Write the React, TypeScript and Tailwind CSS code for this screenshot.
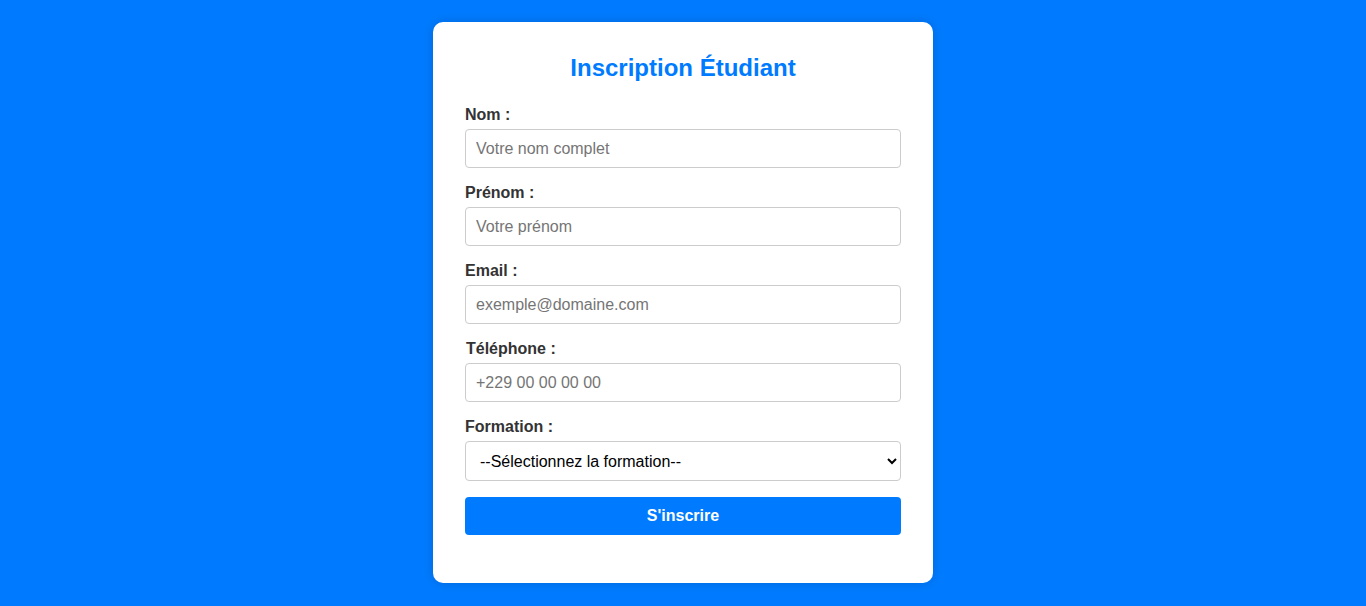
import React from "react";

const fields = [
  { label: "Nom :", placeholder: "Votre nom complet", type: "text" },
  { label: "Prénom :", placeholder: "Votre prénom", type: "text" },
  { label: "Email :", placeholder: "exemple@domaine.com", type: "email" },
  { label: "Téléphone :", placeholder: "+229 00 00 00 00", type: "tel", indent: true },
];

export default function App() {
  return (
    <div
      className="min-h-[606px] w-full bg-[#007bff] flex justify-center pt-[22px]"
      style={{ fontFamily: '"Liberation Sans", Arial, sans-serif' }}
    >
      <div className="w-[500px] h-[561px] bg-white rounded-[10px] shadow-[0_0_12px_rgba(0,0,0,0.15)] px-[32px] pt-[32px] flex flex-col">
        <h2 className="text-[24px] leading-[28px] font-bold text-[#007bff] text-center mb-[23px]">
          Inscription Étudiant
        </h2>
        {fields.map((f) => (
          <div key={f.label} className="flex flex-col mb-[15px]">
            <label className={`text-[16px] leading-[18px] font-bold text-[#333] mt-[1px] mb-[5px] ${f.indent ? "pl-px" : ""}`}>
              {f.label}
            </label>
            <input
              type={f.type}
              placeholder={f.placeholder}
              className="h-[39px] w-full border border-[#ccc] rounded-[4px] px-[10px] text-[16px] text-black placeholder:text-[#757575] outline-none"
            />
          </div>
        ))}
        <div className="flex flex-col mb-[16px]">
          <label className="text-[16px] leading-[18px] font-bold text-[#333] mt-[1px] mb-[5px]">Formation :</label>
          <select className="h-[40px] w-full border border-[#ccc] rounded-[4px] px-[10px] text-[16px] text-black bg-white outline-none">
            <option>--Sélectionnez la formation--</option>
            <option>Informatique</option>
            <option>Gestion</option>
          </select>
        </div>
        <button className="h-[38px] w-full bg-[#007bff] text-white font-bold text-[16px] rounded-[4px]">
          S'inscrire
        </button>
      </div>
    </div>
  );
}
